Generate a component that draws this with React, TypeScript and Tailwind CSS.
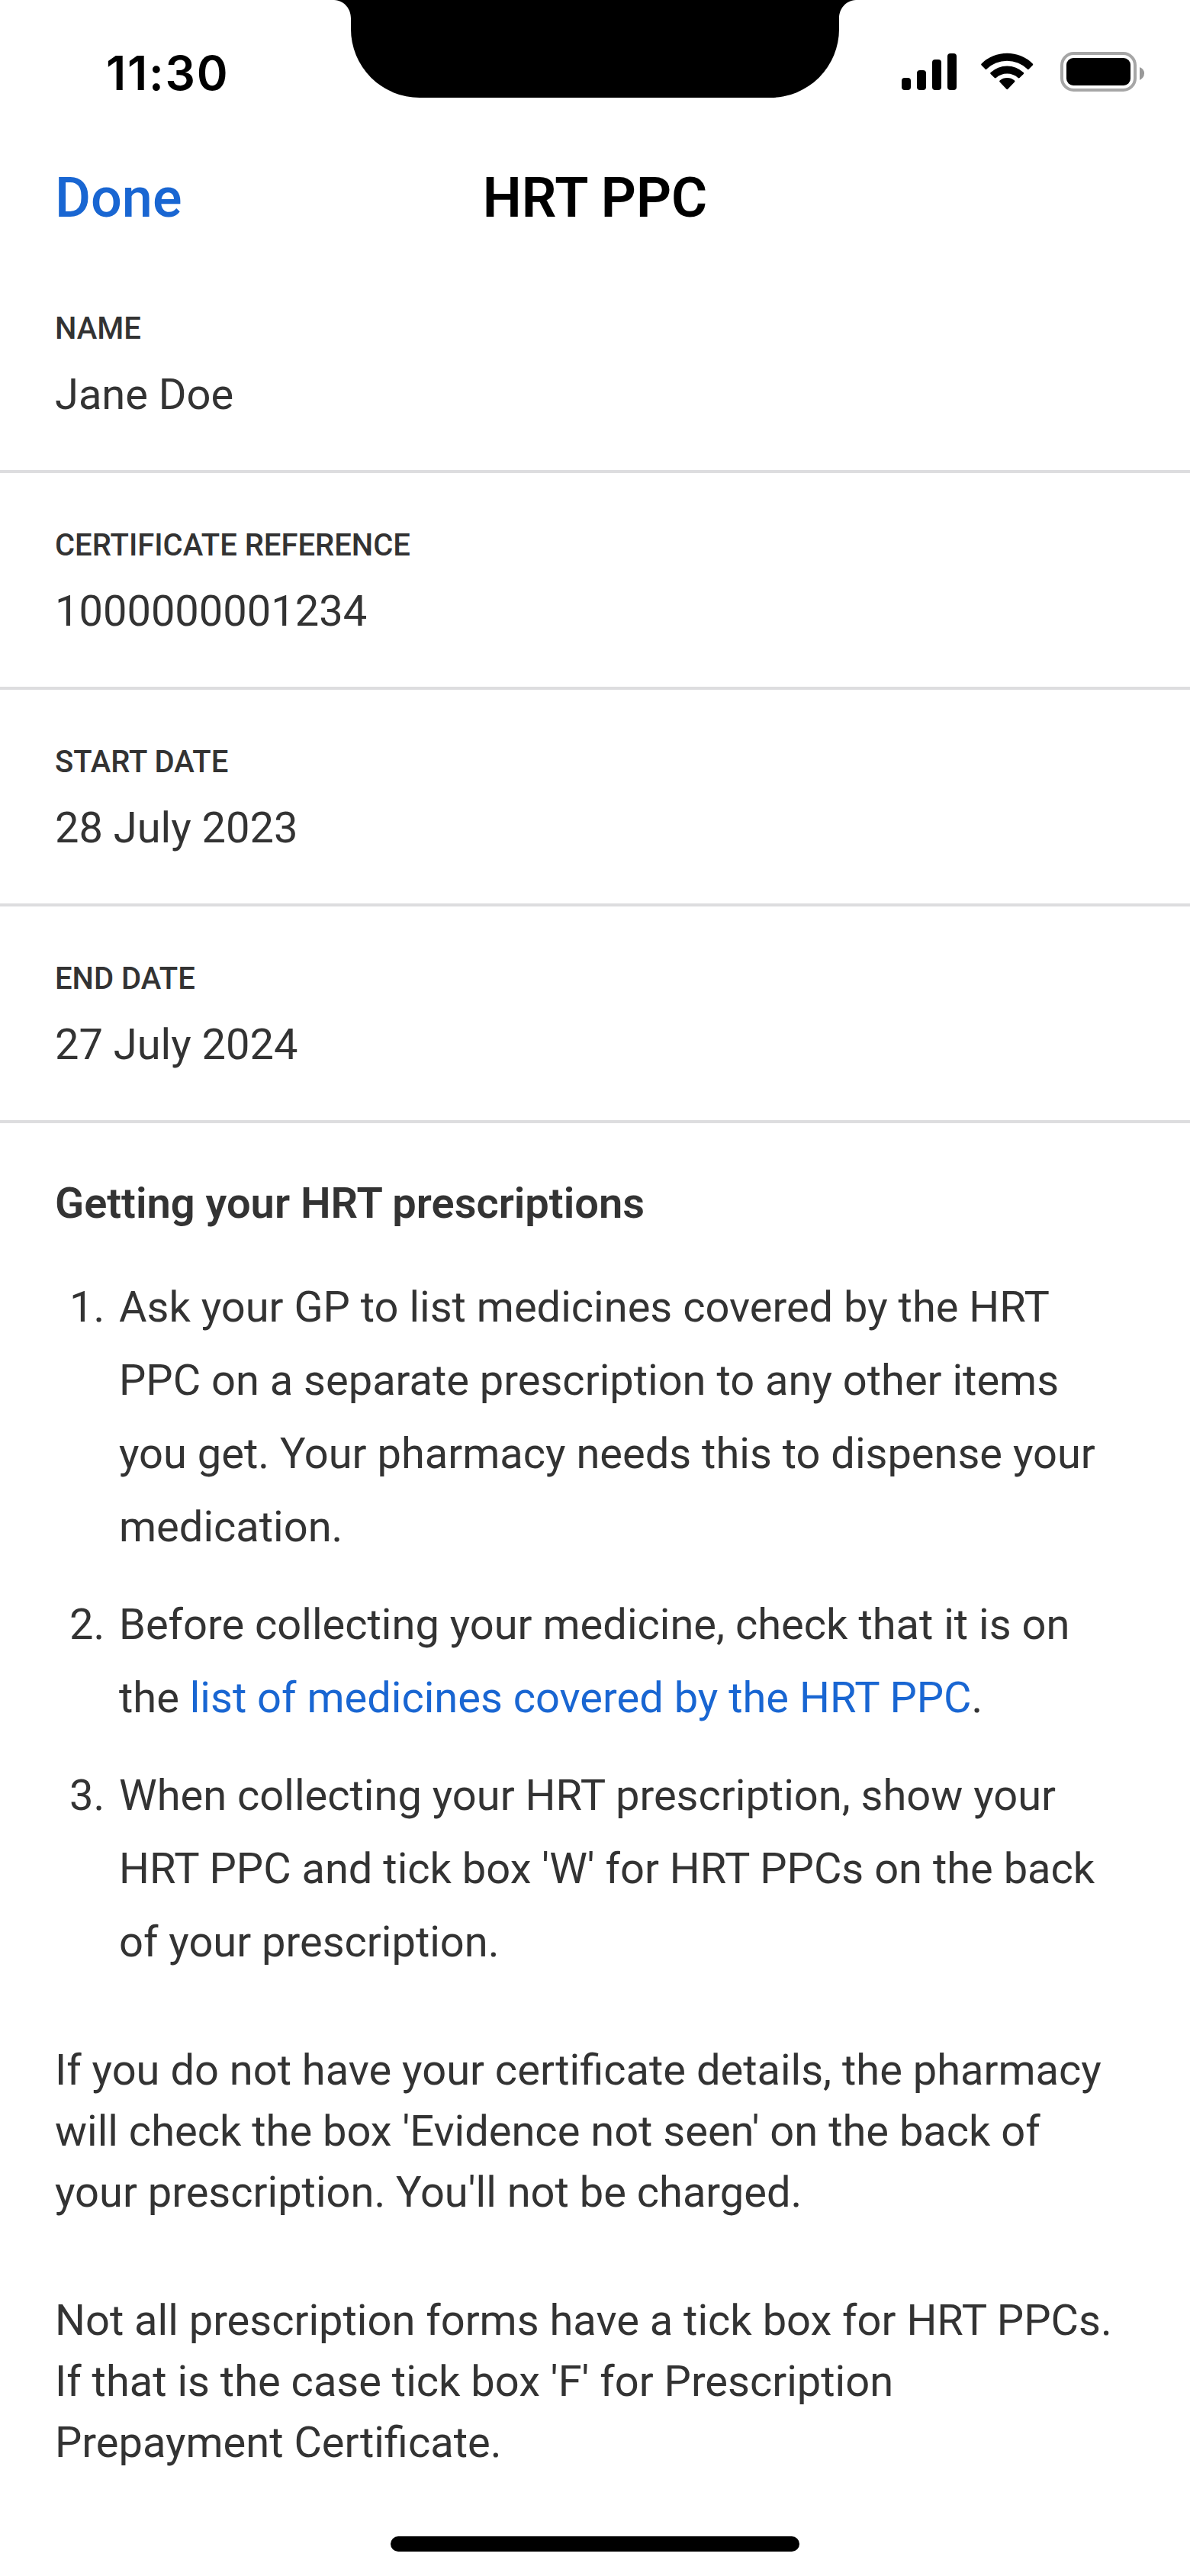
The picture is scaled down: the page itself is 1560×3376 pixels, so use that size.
import React from "react";

const fields = [
  { label: "NAME", value: "Jane Doe" },
  { label: "CERTIFICATE REFERENCE", value: "1000000001234" },
  { label: "START DATE", value: "28 July 2023" },
  { label: "END DATE", value: "27 July 2024" },
];

function StatusIcons() {
  return (
    <svg className="h-[90px] w-[380px]" viewBox="0 0 380 90">
      <rect x="32" y="52" width="12" height="16" rx="4" />
      <rect x="52" y="42" width="12" height="26" rx="4" />
      <rect x="72" y="28" width="12" height="40" rx="4" />
      <rect x="92" y="20" width="12" height="48" rx="4" />
      <path d="M136.6 33.4 A48.3 48.3 0 0 1 203.8 33.4 Q204.8 34.4 203.8 35.4 L198.6 40.8 Q197.8 41.6 196.8 40.6 A38 38 0 0 0 143.4 40.6 Q142.6 41.6 141.8 40.8 L136.6 35.4 Q135.6 34.4 136.6 33.4Z" />
      <path d="M148.6 45 A31.5 31.5 0 0 1 191.8 45 Q192.8 46 191.8 47 L186.6 52 Q185.6 52.8 184.6 52 A21.5 21.5 0 0 0 155.8 52 Q154.8 52.8 153.8 52 L148.6 47 Q147.6 46 148.6 45Z" />
      <path d="M160.6 55.4 A15.6 15.6 0 0 1 180 55.4 Q181 56.4 180 57.4 L171.2 66.8 Q170.3 67.6 169.4 66.8 L160.6 57.4 Q159.6 56.4 160.6 55.4Z" />
      <rect x="242" y="20" width="96" height="48" rx="15.5" fill="none" stroke="#a6a6a6" strokeWidth="4" />
      <rect x="248" y="26" width="84" height="36" rx="9" />
      <path d="M344 38 Q350 40.5 350 46.2 Q350 52 344 55Z" fill="#999999" />
    </svg>
  );
}

export default function App() {
  return (
    <div className="flex h-[3376px] w-[1560px] flex-col overflow-hidden bg-white font-['Roboto',sans-serif] text-[56px] leading-[80px] text-[#333333]">
      <header className="flex h-[188px] shrink-0 items-start text-black">
        <div className="w-[438px] shrink-0 pt-[56px] pl-[139px] font-['Inter',sans-serif] text-[62px] leading-[80px] font-semibold tracking-[1.8px]">
          11:30
        </div>
        <svg className="h-[128px] w-[684px] shrink-0" viewBox="0 0 684 128">
          <path d="M0 0 C14 1 22 12 22 24 V38 A90 90 0 0 0 112 128 H572 A90 90 0 0 0 662 38 V24 C662 12 670 1 684 0Z" />
        </svg>
        <div className="flex w-[438px] shrink-0 justify-start pt-[50px] pl-[28px]">
          <StatusIcons />
        </div>
      </header>
      <nav className="grid h-[144px] shrink-0 grid-cols-3 items-center px-[72px] text-[72px]">
        <a className="font-medium text-[#1966d2]">Done</a>
        <h1 className="text-center font-semibold whitespace-nowrap text-black">HRT PPC</h1>
      </nav>
      <dl className="shrink-0">
        {fields.map((f) => (
          <div key={f.label} className="h-[284px] border-b-4 border-[#dddddf] first:h-[288px] first:pt-[69px] px-[72px] pt-[65px]">
            <dt className="text-[40px] leading-[60px] font-medium">{f.label}</dt>
            <dd className="pt-[16px]">{f.value}</dd>
          </div>
        ))}
      </dl>
      <main className="px-[72px] pt-[65px]">
        <h2 className="font-semibold">Getting your HRT prescriptions</h2>
        <ol className="flex flex-col gap-[32px] pt-[48px] leading-[96px]">
          <li className="flex">
            <span className="w-[84px] shrink-0 pl-[19px]">1.</span>
            <p>
              Ask your GP to list medicines covered by the HRT<br />
              PPC on a separate prescription to any other items<br />
              you get. Your pharmacy needs this to dispense your<br />
              medication.
            </p>
          </li>
          <li className="flex">
            <span className="w-[84px] shrink-0 pl-[19px]">2.</span>
            <p>
              Before collecting your medicine, check that it is on<br />
              the <a className="text-[#1966d2]">list of medicines covered by the HRT PPC</a>.
            </p>
          </li>
          <li className="flex">
            <span className="w-[84px] shrink-0 pl-[19px]">3.</span>
            <p>
              When collecting your HRT prescription, show your<br />
              HRT PPC and tick box 'W' for HRT PPCs on the back<br />
              of your prescription.
            </p>
          </li>
        </ol>
        <p className="pt-[80px]">
          If you do not have your certificate details, the pharmacy<br />
          will check the box 'Evidence not seen' on the back of<br />
          your prescription. You'll not be charged.
        </p>
        <p className="pt-[88px] whitespace-nowrap">
          Not all prescription forms have a tick box for HRT PPCs.<br />
          If that is the case tick box 'F' for Prescription<br />
          Prepayment Certificate.
        </p>
      </main>
      <div className="mx-auto mt-auto mb-[32px] h-[20px] w-[536px] shrink-0 rounded-full bg-black" />
    </div>
  );
}
